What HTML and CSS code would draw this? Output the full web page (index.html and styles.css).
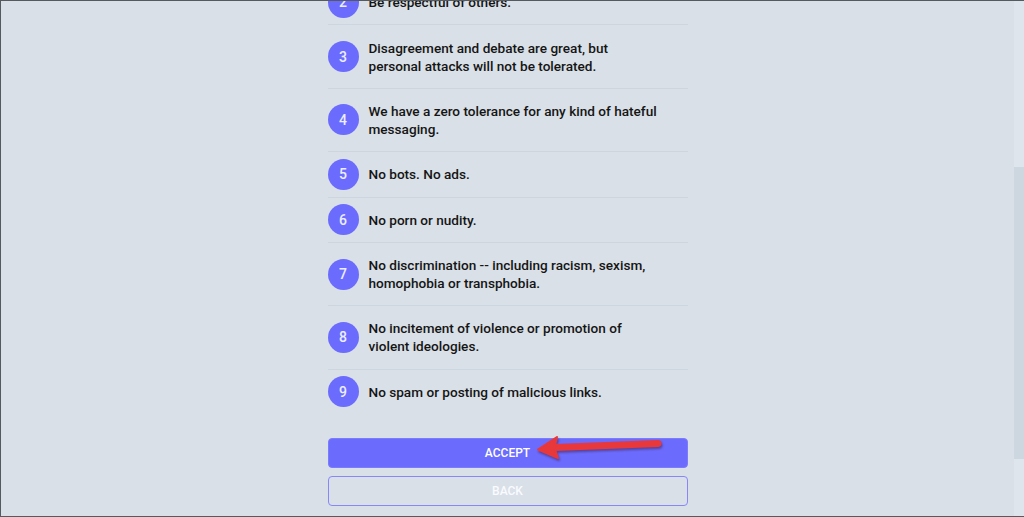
FILE: index.html
```html
<!DOCTYPE html>
<html lang="en">

<head>
    <meta charset="UTF-8">
    <meta name="viewport" content="width=device-width, initial-scale=1.0">
    <title>Server Rules</title>
    <link rel="stylesheet" href="styles.css">
</head>

<body>
    <div class="frame">
        <div class="page">
            <div class="rules">
                <ul class="ruleList">
                    <li class="rule"><span class="num">2</span><p>Be respectful of others.</p></li>
                    <li class="rule"><span class="num">3</span><p>Disagreement and debate are great, but personal attacks will not be tolerated.</p></li>
                    <li class="rule"><span class="num">4</span><p>We have a zero tolerance for any kind of hateful messaging.</p></li>
                    <li class="rule"><span class="num">5</span><p>No bots. No ads.</p></li>
                    <li class="rule"><span class="num">6</span><p>No porn or nudity.</p></li>
                    <li class="rule"><span class="num">7</span><p>No discrimination -- including racism, sexism, homophobia or transphobia.</p></li>
                    <li class="rule"><span class="num">8</span><p>No incitement of violence or promotion of violent ideologies.</p></li>
                    <li class="rule"><span class="num">9</span><p>No spam or posting of malicious links.</p></li>
                </ul>
                <div class="actions">
                    <button type="button" class="btn accept">ACCEPT
                        <svg class="arrow" width="140" height="30" viewBox="0 0 140 30">
                            <line x1="27" y1="15.5" x2="130" y2="11.5" stroke="#e8383c" stroke-width="7" stroke-linecap="round" />
                            <polygon points="10,17.5 29,5 26.5,16 30,26" fill="#e8383c" stroke="#e8383c" stroke-width="2" stroke-linejoin="round" />
                        </svg>
                    </button>
                    <button type="button" class="btn back">BACK</button>
                </div>
            </div>
        </div>
        <div class="scrollbar"><div class="thumb"></div></div>
    </div>
</body>

</html>
```

FILE: styles.css
```css
body {
    margin: 0;
    background: #d9e0e7;
    font-family: Roboto, "Liberation Sans", sans-serif;
}

.frame {
    display: flex;
    height: 100vh;
    box-sizing: border-box;
    border: 1px solid #555a5e;
    border-right: 0;
    overflow: hidden;
}

.page {
    flex: 1;
    display: flex;
    justify-content: center;
}

.rules {
    width: 360px;
    margin-top: -21px;
}

.ruleList {
    list-style: none;
    margin: 0;
    padding: 0;
}

.rule {
    display: flex;
    align-items: center;
    gap: 10px;
    border-bottom: 1px solid #cdd6df;
}

.rule:last-child {
    border-bottom: 0;
}

.num {
    flex: none;
    width: 31px;
    height: 31px;
    margin: -7px 0;
    border-radius: 50%;
    background: #6b6bfe;
    color: #eceeff;
    font-size: 14px;
    font-weight: 500;
    display: flex;
    align-items: center;
    justify-content: center;
}

.rule p {
    margin: 0;
    padding: 13.2px 26px 13.2px 0;
    font-size: 13.6px;
    font-weight: 500;
    line-height: 18px;
    color: #151515;
}

.actions {
    display: flex;
    flex-direction: column;
    gap: 8px;
    margin-top: 24px;
}

.btn {
    height: 30px;
    border-radius: 4px;
    font: 500 12px Roboto, "Liberation Sans", sans-serif;
    color: #fff;
    cursor: pointer;
}

.accept {
    position: relative;
    background: #6b6bfe;
    border: 1px solid #7b7bfe;
}

.back {
    background: transparent;
    border: 1px solid #8787fb;
    color: #fafbff;
}

.arrow {
    position: absolute;
    left: 199px;
    top: -7px;
    overflow: visible;
    filter: drop-shadow(1px 2px 1px rgba(60, 20, 40, .45));
}

.scrollbar {
    width: 10px;
    background: #dfe5ec;
}

.thumb {
    margin-top: 166px;
    height: 292px;
    background: #cdd7e0;
}
```
